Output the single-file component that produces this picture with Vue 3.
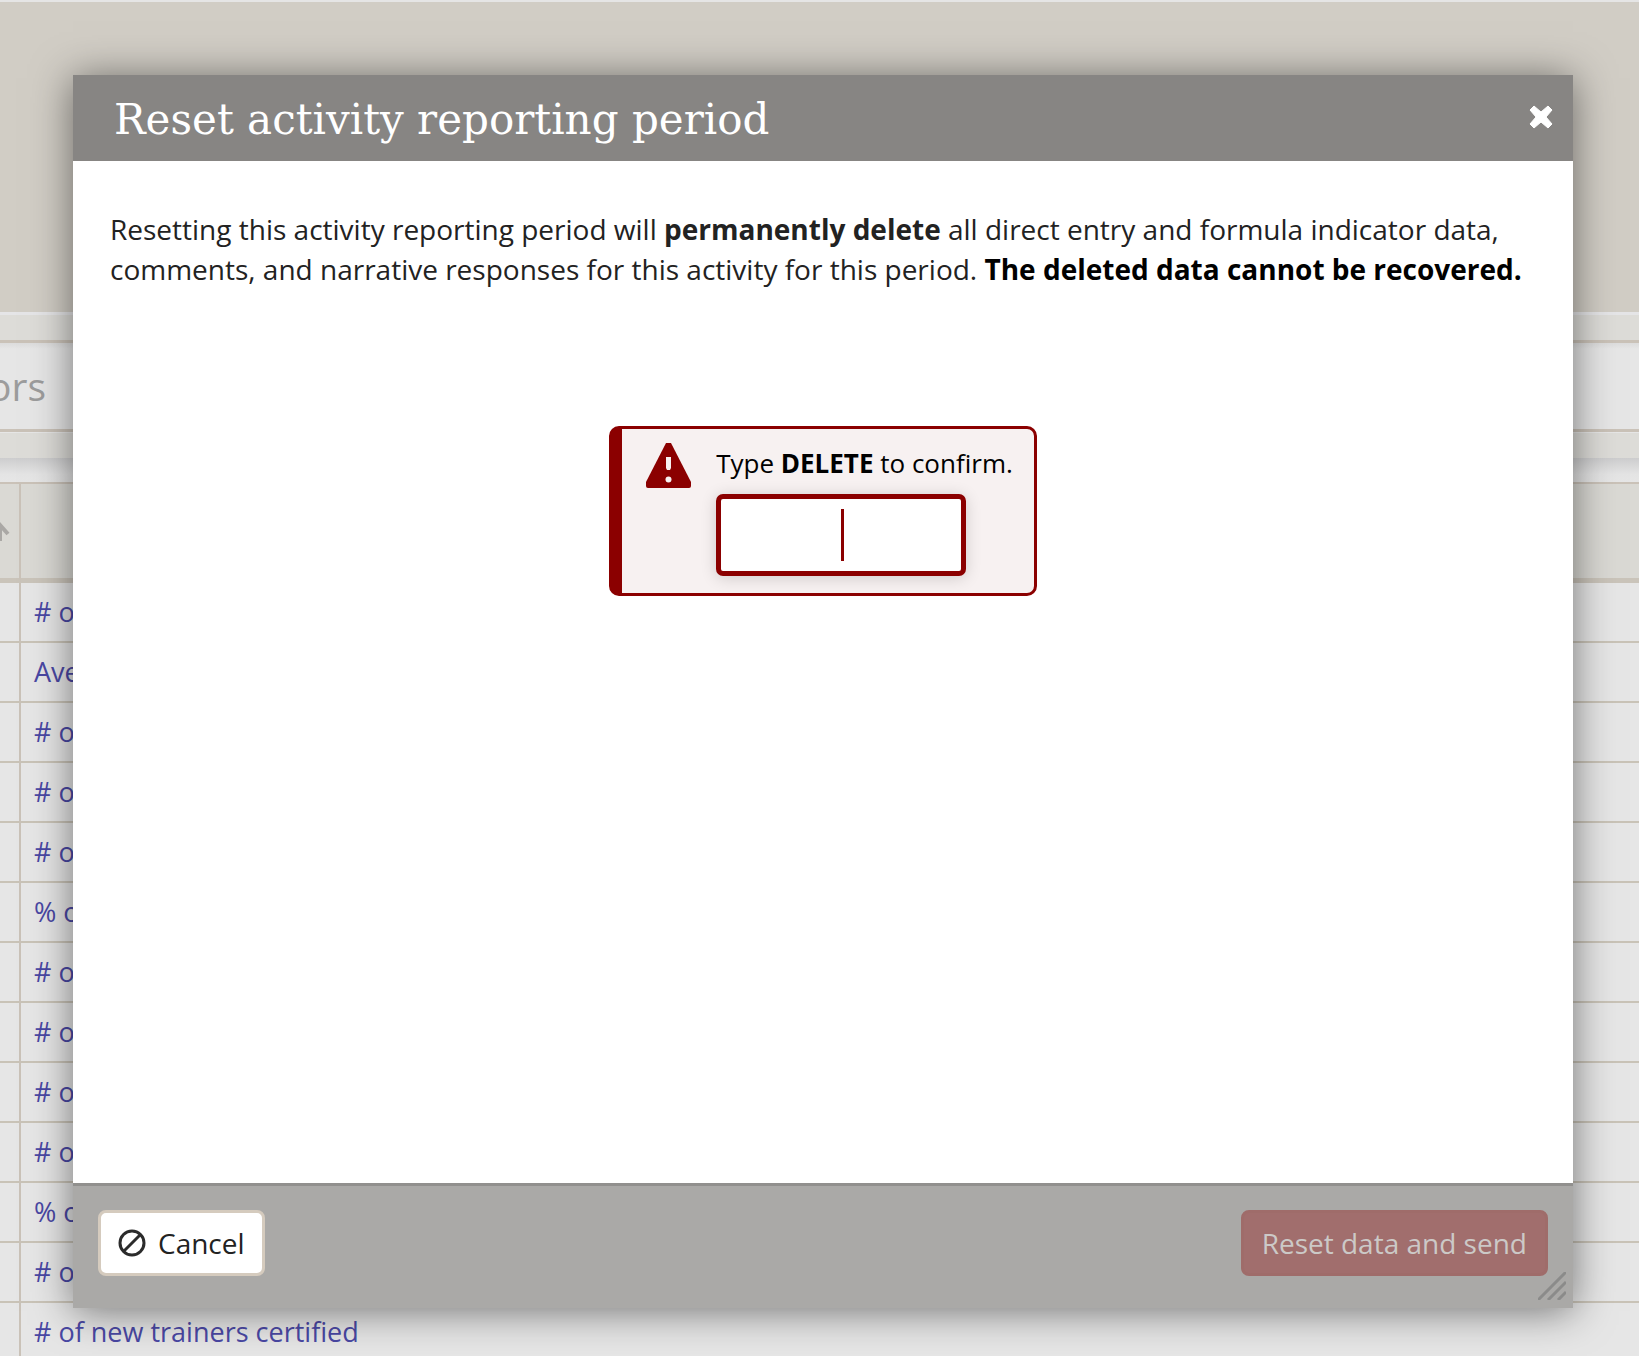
<script setup>
import { ref } from 'vue'

const confirmation = ref('')
const rows = ['# of', 'Ave', '# of', '# of', '# of', '% of', '# of', '# of', '# of', '# of', '% of', '# of', '# of new trainers certified']
</script>

<template>
  <div class="screen">
    <div class="page">
      <div class="banner"></div>
      <div class="strip"></div>
      <div class="search">
        <input class="search-box" type="text" placeholder="ors" aria-label="Search" />
      </div>
      <div class="strip lower"></div>
      <div class="gap"></div>
      <table class="grid">
        <thead>
          <tr>
            <th class="sort">
              <svg class="arrow" width="20" height="20" viewBox="0 0 20 20" aria-hidden="true">
                <path d="M10 20V4M2 13L10 4L18 13" fill="none" stroke="#aaa8a5" stroke-width="4" />
              </svg>
            </th>
            <th></th>
          </tr>
        </thead>
        <tbody>
          <tr v-for="(row, i) in rows" :key="i">
            <td class="sort"></td>
            <td><a href="#">{{ row }}</a></td>
          </tr>
        </tbody>
      </table>
    </div>

    <div class="overlay">
      <section class="dialog" role="dialog" aria-labelledby="dialog-title">
        <header class="dialog-head">
          <h1 id="dialog-title">Reset activity reporting period</h1>
          <button class="close" type="button" aria-label="Close">
            <svg width="24" height="24" viewBox="0 0 24 24" aria-hidden="true">
              <path d="M5 1L12 7L19 1L23 5L17 12L23 19L19 23L12 17L5 23L1 19L7 12L1 5Z" fill="#fff" stroke="#fff" stroke-width="1" stroke-linejoin="round" />
            </svg>
          </button>
        </header>

        <div class="dialog-body">
          <p class="message">
            Resetting this activity reporting period will <strong>permanently delete</strong> all direct entry and formula indicator data, comments, and narrative responses for this activity for this period. <strong class="final">The deleted data cannot be recovered.</strong>
          </p>
          <div class="confirm">
            <svg class="warning" width="45" height="45" viewBox="0 0 45 45" aria-hidden="true">
              <path d="M20 0H25L45 39V43Q45 45 43 45H2Q0 45 0 43V39Z" fill="#8b0000" />
              <path d="M20 14H25V25L24 27H21L20 25Z" fill="#f7f1f1" />
              <circle cx="22.5" cy="36.5" r="3" fill="#f7f1f1" />
            </svg>
            <div class="field">
              <label for="confirm-text">Type <strong>DELETE</strong> to confirm.</label>
              <div class="entry">
                <input id="confirm-text" v-model="confirmation" type="text" autocomplete="off" />
              </div>
            </div>
          </div>
        </div>

        <footer class="dialog-foot">
          <button class="btn cancel" type="button">
            <svg width="28" height="28" viewBox="0 0 28 28" aria-hidden="true">
              <circle cx="14" cy="14" r="12" fill="none" stroke="#2b2b2b" stroke-width="3" />
              <path d="M6 22L22 6" stroke="#2b2b2b" stroke-width="3" />
            </svg>
            Cancel
          </button>
          <button class="btn reset" type="button" disabled>Reset data and send</button>
          <svg class="grip" width="28" height="28" viewBox="0 0 28 28" aria-hidden="true">
            <path d="M0 28L28 0M10 28L28 10M20 28L28 20" stroke="#8b8b8a" stroke-width="3" />
          </svg>
        </footer>
      </section>
    </div>
  </div>
</template>

<style>
body {
  margin: 0;
}
</style>

<style scoped>
* {
  box-sizing: border-box;
}

.screen {
  position: relative;
  height: 100vh;
  overflow: hidden;
  background: #e6e6e6;
  font-family: "Open Sans", "Noto Sans", sans-serif;
}

.banner {
  height: 315px;
  border-top: 2px solid #e5e5e5;
  border-bottom: 3px solid #e5e5e7;
  background: #d1cdc5;
}

.strip {
  height: 25px;
  background: #dddcd8;
}

.search {
  height: 92px;
  border-top: 3px solid #cac2b8;
  border-bottom: 3px solid #cac2b8;
  background: linear-gradient(#dcdcdc, #e6e6e6 6px);
}

.search-box {
  display: block;
  width: 100%;
  height: 84px;
  padding: 0;
  border: 0;
  background: transparent;
  font: 39px "Open Sans", sans-serif;
  text-indent: -12px;
}

.search-box::placeholder {
  color: #9c9c9c;
  opacity: 1;
}

.strip.lower {
  height: 26px;
  border-top: 1px solid #e6e6e6;
}

.gap {
  height: 24px;
  background: linear-gradient(#cdcdce, #e4e4e4 16px, #e6e6e6);
}

.grid {
  width: 100%;
  table-layout: fixed;
  border-collapse: separate;
  border-spacing: 0;
}

.grid th {
  height: 101px;
  padding: 0;
  border-top: 2px solid #cac2b8;
  border-bottom: 5px solid #cac4ba;
  background: #dad9d4;
}

.grid td {
  height: 60px;
  padding: 0 13px;
  border-bottom: 2px solid #c9c3b7;
  font-size: 27px;
  line-height: 38px;
  white-space: nowrap;
}

.grid .sort {
  width: 21px;
  padding: 0;
  border-right: 2px solid #cac2b8;
}

.arrow {
  display: block;
  margin-left: -10px;
}

.grid a {
  color: #4a48a4;
  text-decoration: none;
}

.overlay {
  position: absolute;
  inset: 0;
  display: flex;
  padding: 75px 66px 48px 73px;
}

.dialog {
  display: flex;
  flex: 1;
  flex-direction: column;
  background: #fff;
  box-shadow: 0 3px 38px rgba(0, 0, 0, 0.5);
}

.dialog-head {
  display: flex;
  align-items: flex-start;
  justify-content: space-between;
  height: 86px;
  padding: 15px 20px 0 41px;
  background: #878583;
}

.dialog-head h1 {
  margin: 0;
  color: #fff;
  font: 400 42px/60px "DejaVu Serif", serif;
}

.close {
  display: flex;
  margin-top: 15px;
  padding: 0;
  border: 0;
  background: none;
}

.dialog-body {
  display: flex;
  flex: 1;
  flex-direction: column;
  align-items: center;
  padding: 48px 37px;
}

.message {
  align-self: stretch;
  margin: 0 0 137px;
  color: #222;
  font-size: 28px;
  line-height: 40px;
}

.final {
  color: #000;
}

.confirm {
  display: flex;
  gap: 25px;
  height: 170px;
  padding: 14px 21px 0 24px;
  border: 3px solid #8b0000;
  border-left-width: 13px;
  border-radius: 10px;
  background: #f7f1f1;
}

.field label {
  display: block;
  color: #000;
  font-size: 26px;
  line-height: 40px;
}

.entry {
  position: relative;
  width: 250px;
  margin-top: 11px;
}

.entry input {
  display: block;
  width: 100%;
  height: 82px;
  border: 5px solid #8b0000;
  border-radius: 7px;
  outline: 0;
  background: #fff;
  box-shadow: 0 2px 16px rgba(0, 0, 0, 0.16);
  color: #8b0000;
  font: 39px "Open Sans", sans-serif;
  text-align: center;
}

.entry::after {
  position: absolute;
  top: 15px;
  left: 50%;
  width: 3px;
  height: 52px;
  background: #8b0000;
  content: "";
}

.dialog-foot {
  position: relative;
  display: flex;
  align-items: flex-start;
  justify-content: space-between;
  height: 125px;
  padding: 24px 25px;
  border-top: 3px solid #91908e;
  background: #aaa9a7;
}

.btn {
  display: flex;
  align-items: center;
  height: 66px;
  border: 3px solid #d5cbbe;
  border-radius: 8px;
  font: 28px "Open Sans", sans-serif;
}

.cancel {
  gap: 12px;
  padding: 0 17px;
  background: #fff;
  color: #222;
}

.reset {
  padding: 0 18px;
  border-color: #9f6c6a;
  background: #a16e6d;
  color: #ccc9c7;
}

.grip {
  position: absolute;
  right: 7px;
  bottom: 8px;
}
</style>
